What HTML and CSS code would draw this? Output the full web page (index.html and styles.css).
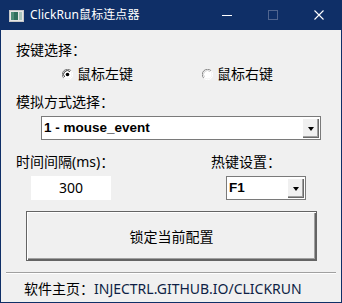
FILE: index.html
```html
<!DOCTYPE html>
<html>
<head>
    <title>ClickRun鼠标连点器</title>
    <link rel="stylesheet" href="styles.css">
</head>
<body>
    <div class="window">
        <div class="titlebar">
            <svg class="app-icon" width="15" height="12" viewBox="0 0 15 12">
                <rect x="0.5" y="0.5" width="14" height="11" fill="#e6e6e6" stroke="#c8c8c8"/>
                <rect x="2" y="2" width="7" height="8" fill="#2f6f5c"/>
                <rect x="2" y="2" width="3" height="8" fill="#4d8c77"/>
                <rect x="10" y="2" width="3" height="8" fill="#a9c4bc"/>
            </svg>
            <span class="title">ClickRun鼠标连点器</span>
            <div class="caption-buttons">
                <div class="cap"><span class="cap-min"></span></div>
                <div class="cap"><span class="cap-max"></span></div>
                <div class="cap">
                    <svg width="10" height="10" viewBox="0 0 10 10">
                        <path d="M0.5 0.5 L9.5 9.5 M9.5 0.5 L0.5 9.5" stroke="#fff" stroke-width="1.1"/>
                    </svg>
                </div>
            </div>
        </div>

        <div class="content">
            <div class="label">按键选择：</div>
            <div class="radio-row">
                <div class="radio">
                    <svg width="11" height="11" viewBox="0 0 11 11">
                        <path d="M9.2 1.8 A5 5 0 0 0 1.8 9.2" fill="none" stroke="#7a7a7a" stroke-width="1"/>
                        <path d="M1.8 9.2 A5 5 0 0 0 9.2 1.8" fill="none" stroke="#ffffff" stroke-width="1"/>
                        <circle cx="5.5" cy="5.5" r="4" fill="#fff"/>
                        <path d="M8 2.7 A3.6 3.6 0 0 0 2.7 8" fill="none" stroke="#404040" stroke-width="1"/>
                        <circle cx="5.5" cy="5.5" r="1.8" fill="#000"/>
                    </svg>
                    <span>鼠标左键</span>
                </div>
                <div class="radio">
                    <svg width="11" height="11" viewBox="0 0 11 11">
                        <path d="M9.2 1.8 A5 5 0 0 0 1.8 9.2" fill="none" stroke="#8a8a8a" stroke-width="1"/>
                        <path d="M1.8 9.2 A5 5 0 0 0 9.2 1.8" fill="none" stroke="#ffffff" stroke-width="1"/>
                        <circle cx="5.5" cy="5.5" r="4" fill="#fff"/>
                        <path d="M8 2.7 A3.6 3.6 0 0 0 2.7 8" fill="none" stroke="#d4d4d4" stroke-width="1"/>
                    </svg>
                    <span>鼠标右键</span>
                </div>
            </div>

            <div class="label label-gap">模拟方式选择：</div>
            <div class="combo combo-wide">
                <span class="combo-text">1 - mouse_event</span>
                <span class="combo-btn"><span class="arrow"></span></span>
            </div>

            <div class="settings">
                <div class="field">
                    <div class="label">时间间隔(ms)：</div>
                    <div class="interval">300</div>
                </div>
                <div class="field">
                    <div class="label">热键设置：</div>
                    <div class="combo combo-small">
                        <span class="combo-text">F1</span>
                        <span class="combo-btn"><span class="arrow"></span></span>
                    </div>
                </div>
            </div>

            <button class="lock-btn" type="button">锁定当前配置</button>

            <div class="separator"></div>

            <div class="footer">软件主页：<span class="link">INJECTRL.GITHUB.IO/CLICKRUN</span></div>
        </div>
    </div>
</body>
</html>
```

FILE: styles.css
```css
body {
    margin: 0;
    font-family: "Noto Sans", "Noto Sans CJK SC", sans-serif;
    background: #f0f0f0;
}

.window {
    width: 342px;
    height: 303px;
    box-sizing: border-box;
    border: 1px solid #0f2f67;
    border-top: none;
    background: #f0f0f0;
    overflow: hidden;
}

/* title bar */
.titlebar {
    height: 30px;
    margin: 0 -1px;
    background: #0f2f67;
    display: flex;
    align-items: center;
    color: #fff;
}

.app-icon {
    margin-left: 9px;
    margin-top: 1px;
}

.title {
    margin-left: 6px;
    font-size: 12px;
    line-height: 16px;
    letter-spacing: 0.1px;
}

.caption-buttons {
    margin-left: auto;
    display: flex;
    height: 30px;
}

.cap {
    width: 46px;
    height: 30px;
    display: flex;
    align-items: center;
    justify-content: center;
}

.cap-min {
    width: 10px;
    height: 1px;
    background: #fff;
}

.cap-max {
    width: 8px;
    height: 8px;
    border: 1px solid #50658f;
}

/* content */
.content {
    padding: 10px 0 0 15px;
    color: #000;
    font-size: 14px;
}

.label {
    line-height: 20px;
    height: 20px;
}

.label-gap {
    margin-top: 8px;
}

.radio-row {
    margin-top: 4px;
    padding-left: 46px;
    display: grid;
    grid-template-columns: 140px 140px;
    height: 20px;
}

.radio {
    display: flex;
    align-items: center;
    line-height: 20px;
}

.radio svg {
    margin-right: 4px;
}

.combo {
    margin-top: 4px;
    height: 24px;
    box-sizing: border-box;
    border: 1px solid #7a7a7a;
    background: #fff;
    padding: 1px;
    display: flex;
}

.combo-wide {
    margin-left: 25px;
    width: 280px;
}

.combo-small {
    margin-left: 15px;
    width: 80px;
}

.combo-text {
    flex: 1;
    padding-left: 1px;
    font-family: "Liberation Sans", Arial, sans-serif;
    font-weight: bold;
    font-size: 13.5px;
    line-height: 20px;
}

.combo-btn {
    width: 17px;
    height: 20px;
    background: #f0f0f0;
    box-shadow: inset 1px 1px #ffffff, inset -1px -1px #696969, inset -2px -2px #a0a0a0;
    display: flex;
    align-items: center;
    justify-content: center;
}

.arrow {
    width: 0;
    height: 0;
    border-left: 3.5px solid transparent;
    border-right: 3.5px solid transparent;
    border-top: 4px solid #000;
    margin-top: 1px;
}

.settings {
    margin-top: 12px;
    display: grid;
    grid-template-columns: 195px 1fr;
}

.interval {
    margin-top: 4px;
    margin-left: 15px;
    width: 80px;
    height: 24px;
    background: #fff;
    text-align: center;
    line-height: 24px;
    font-size: 14px;
}

.lock-btn {
    display: block;
    margin-top: 11px;
    margin-left: 10px;
    width: 291px;
    height: 50px;
    box-sizing: border-box;
    border: 1px solid #646464;
    background: #f0f0f0;
    box-shadow: inset 1px 1px #ffffff, inset -1px -1px #646464, inset -2px -2px #a0a0a0;
    font-family: "Noto Sans", "Noto Sans CJK SC", sans-serif;
    font-size: 14px;
    color: #000;
    padding: 0;
}

.separator {
    margin-top: 11px;
    margin-left: -10px;
    width: 330px;
    height: 0;
    border-top: 1px solid #a0a0a0;
    border-bottom: 1px solid #ffffff;
}

.footer {
    margin-top: 5px;
    padding-left: 8px;
    line-height: 20px;
    white-space: nowrap;
}

.link {
    color: #0e1f45;
}
```
